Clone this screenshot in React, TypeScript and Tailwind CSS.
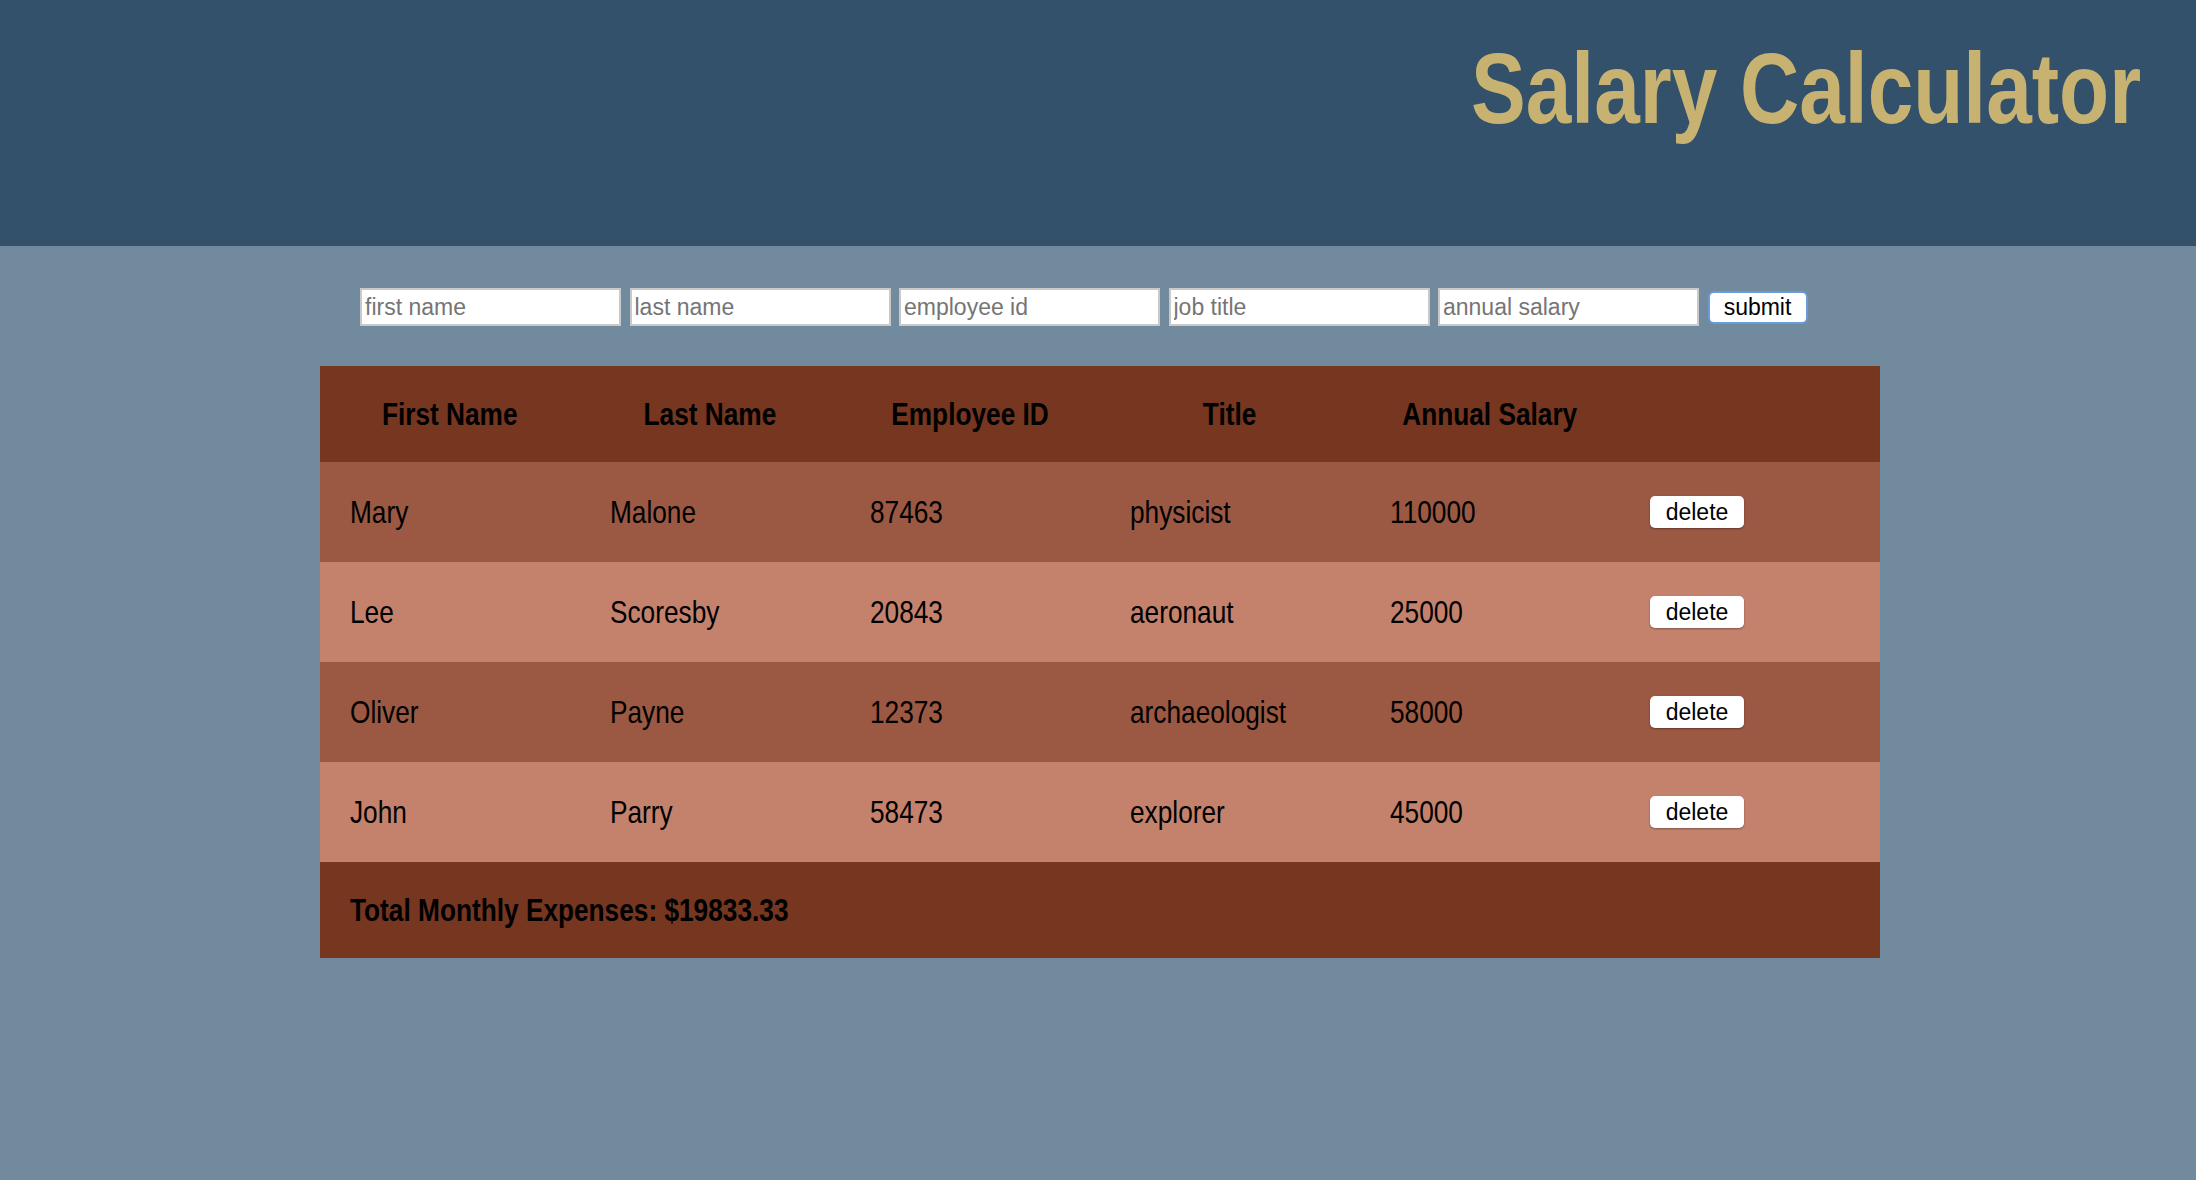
import React, { useState } from 'react';

interface Employee {
  firstName: string;
  lastName: string;
  id: string;
  title: string;
  salary: number;
}

const initialEmployees: Employee[] = [
  { firstName: 'Mary', lastName: 'Malone', id: '87463', title: 'physicist', salary: 110000 },
  { firstName: 'Lee', lastName: 'Scoresby', id: '20843', title: 'aeronaut', salary: 25000 },
  { firstName: 'Oliver', lastName: 'Payne', id: '12373', title: 'archaeologist', salary: 58000 },
  { firstName: 'John', lastName: 'Parry', id: '58473', title: 'explorer', salary: 45000 },
];

// the page uses a narrow Arial; squeeze Liberation Sans to match
const Narrow: React.FC<{ children: React.ReactNode; origin?: string }> = ({ children, origin = 'origin-left' }) => (
  <span className={`inline-block whitespace-nowrap scale-x-[0.82] ${origin}`}>{children}</span>
);

const App: React.FC = () => {
  const [employees, setEmployees] = useState<Employee[]>(initialEmployees);

  const total = employees.reduce((sum, e) => sum + e.salary, 0) / 12;

  const placeholders = ['first name', 'last name', 'employee id', 'job title', 'annual salary'];
  const headers = ['First Name', 'Last Name', 'Employee ID', 'Title', 'Annual Salary'];

  return (
    <div className="min-h-[1180px] bg-[#728a9e] font-['Liberation_Sans',Arial,sans-serif]">
      <header className="h-[246px] bg-[#33516a] flex justify-end pr-[55px]">
        <h1 className="pt-[38px] text-[100px] leading-none font-bold text-[#c7b271]">
          <Narrow origin="origin-right">Salary Calculator</Narrow>
        </h1>
      </header>

      <div className="flex items-center gap-[8.5px] pl-[360px] pt-[42px]">
        {placeholders.map(p => (
          <input
            key={p}
            type="text"
            placeholder={p}
            className="w-[261px] h-[38px] bg-white border-2 border-[#c9c9c9] px-[3px] text-[23px] text-black placeholder:text-[#757575] outline-none"
          />
        ))}
        <button className="w-[100px] h-[33px] bg-white rounded-[6px] border-2 border-[#6b9ad8] text-[23px] leading-none text-black">
          submit
        </button>
      </div>

      <table className="ml-[320px] mt-[40px] w-[1560px] table-fixed border-collapse text-[32px] text-black">
        <thead>
          <tr className="h-[96px] bg-[#76361f]">
            {headers.map(h => (
              <th key={h} className="font-bold">
                <Narrow origin="origin-center">{h}</Narrow>
              </th>
            ))}
            <th></th>
          </tr>
        </thead>
        <tbody>
          {employees.map((e, i) => (
            <tr key={e.id} className={`h-[100px] ${i % 2 === 0 ? 'bg-[#9b5842]' : 'bg-[#c4826d]'}`}>
              <td className="pl-[30px]"><Narrow>{e.firstName}</Narrow></td>
              <td className="pl-[30px]"><Narrow>{e.lastName}</Narrow></td>
              <td className="pl-[30px]"><Narrow>{e.id}</Narrow></td>
              <td className="pl-[30px]"><Narrow>{e.title}</Narrow></td>
              <td className="pl-[30px]"><Narrow>{e.salary}</Narrow></td>
              <td className="pl-[30px] align-middle">
                <button
                  onClick={() => setEmployees(employees.filter(x => x.id !== e.id))}
                  className="block w-[94px] h-[32px] bg-white rounded-[5px] shadow-[0_1px_2px_rgba(0,0,0,0.35)] text-[23px] leading-none text-black"
                >
                  delete
                </button>
              </td>
            </tr>
          ))}
        </tbody>
        <tfoot>
          <tr className="h-[96px] bg-[#76361f]">
            <td colSpan={6} className="pl-[30px] font-bold">
              <Narrow>Total Monthly Expenses: ${total.toFixed(2)}</Narrow>
            </td>
          </tr>
        </tfoot>
      </table>
    </div>
  );
};

export default App;
